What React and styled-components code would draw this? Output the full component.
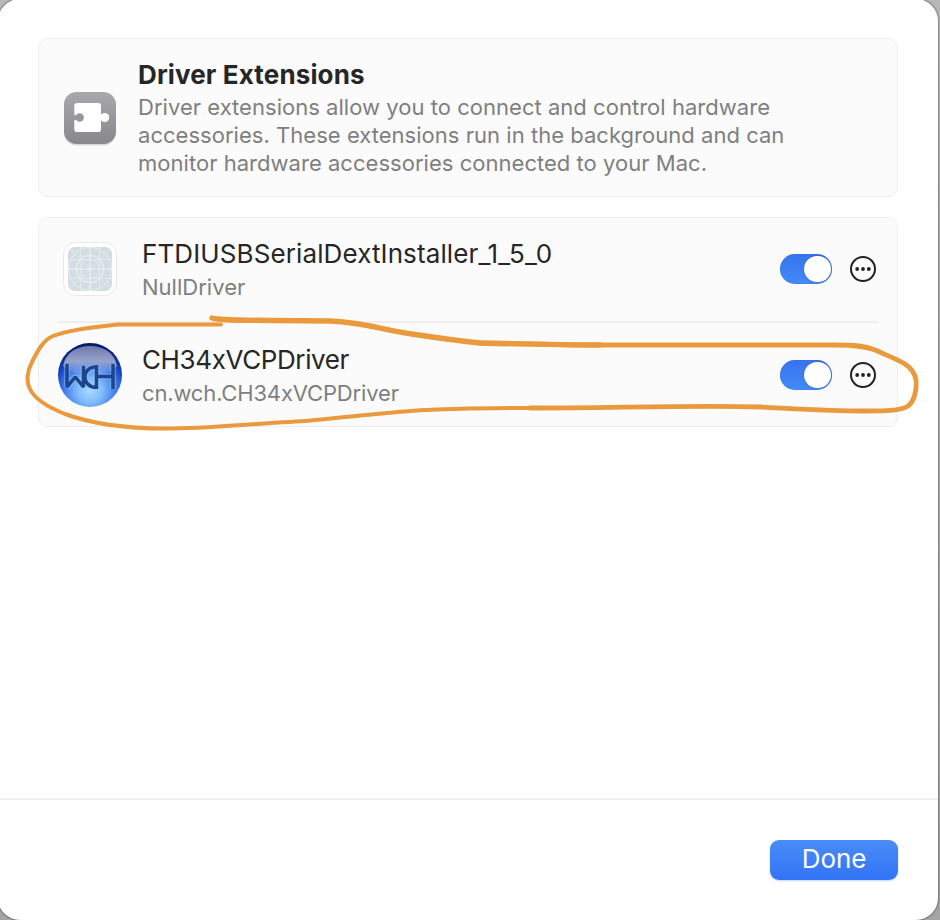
import React from "react";
import styled, { createGlobalStyle } from "styled-components";

const GlobalStyle = createGlobalStyle`
  * { box-sizing: border-box; }
  body {
    margin: 0;
    background: #b4b4b4;
    overflow: hidden;
    font-family: Inter, "Liberation Sans", sans-serif;
  }
`;

const Desktop = styled.div`
  position: relative;
  width: 940px;
  height: 920px;
  overflow: hidden;
  background: linear-gradient(to bottom, #b9b9b9, #a5a5a5);
`;

const Sheet = styled.main`
  display: flex;
  flex-direction: column;
  width: 940px;
  height: 921px;
  margin: -1px 0 0 -2px;
  border-radius: 22px;
  background: #fff;
  box-shadow: 0 0 2px 1px rgba(0, 0, 0, 0.3);
`;

const Content = styled.div`
  display: flex;
  flex: 1;
  flex-direction: column;
  gap: 20px;
  padding: 39px 40px 0;
`;

const Card = styled.section`
  border: 1px solid #ededed;
  border-radius: 10px;
  background: #fbfbfb;
`;

const Intro = styled(Card)`
  display: flex;
  align-items: center;
  gap: 21px;
  height: 159px;
  padding-left: 24px;
`;

const Title = styled.h1`
  margin: 0;
  color: #262626;
  font-size: 26px;
  font-weight: 700;
  line-height: 32px;
  letter-spacing: 0.13px;
`;

const Description = styled.p`
  margin: 2px 0 0;
  color: #7f7f7f;
  font-size: 22px;
  line-height: 28px;
  letter-spacing: 0.03px;
  white-space: pre-line;
`;

const DriverList = styled(Card)`
  height: 210px;
  padding: 0 19px;
`;

const DriverRow = styled.div`
  display: flex;
  align-items: center;
  height: ${({ $last }) => ($last ? "104px" : "105px")};
  padding: 0 2px ${({ $last }) => ($last ? "0" : "1px")} 0;
  border-bottom: ${({ $last }) => ($last ? "none" : "2px solid #eee")};
`;

const IconSlot = styled.div`
  display: flex;
  flex: none;
  justify-content: center;
  width: 64px;
  margin-right: 20px;
`;

const DriverText = styled.div`
  flex: 1;
  padding-top: 2px;
`;

const DriverName = styled.div`
  color: #262626;
  font-size: 26px;
  line-height: 34px;
  letter-spacing: ${({ $tracking }) => $tracking};
`;

const DriverVendor = styled.div`
  color: #7f7f7f;
  font-size: 22px;
  line-height: 32px;
  letter-spacing: ${({ $tracking }) => $tracking};
`;

const Toggle = styled.button`
  display: flex;
  align-items: center;
  justify-content: flex-end;
  width: 52px;
  height: 30px;
  margin-right: 18px;
  padding: 0 1.5px;
  border: 0;
  border-radius: 15px;
  background: linear-gradient(to bottom, #3673ee, #448af8);
  box-shadow: inset 0 0 1px rgba(20, 70, 190, 0.5);
`;

const Knob = styled.span`
  width: 26.5px;
  height: 26.5px;
  border-radius: 50%;
  background: #fff;
  box-shadow: 0 0 2px rgba(0, 30, 110, 0.4);
`;

const MoreButton = styled.button`
  display: flex;
  padding: 0;
  border: 0;
  background: none;
`;

const Footer = styled.footer`
  display: flex;
  align-items: flex-start;
  justify-content: flex-end;
  height: 122px;
  padding: 40px 40px 0;
  border-top: 2px solid #efefef;
`;

const DoneButton = styled.button`
  width: 128px;
  height: 40px;
  padding: 0 0 4px;
  border: 0;
  border-radius: 9px;
  background: linear-gradient(to bottom, #4a8cf8, #3173f6);
  box-shadow: 0 1px 2px rgba(49, 115, 246, 0.3);
  color: #fff;
  font-family: inherit;
  font-size: 26px;
  letter-spacing: -0.1px;
`;

const Annotation = styled.svg`
  position: absolute;
  inset: 0;
  pointer-events: none;
`;

const PuzzleGlyph = styled.svg`
  flex: none;
  margin-top: 2px;
`;

const PuzzleIcon = () => (
  <PuzzleGlyph width="54" height="56" viewBox="63 91 54 56">
    <defs>
      <linearGradient id="puzzle-bg" x2="0" y2="1">
        <stop stopColor="#a9a9ad" />
        <stop offset="1" stopColor="#87878c" />
      </linearGradient>
    </defs>
    <rect x="64" y="93" width="52" height="52.5" rx="12.500" fill="#000" opacity=".14" />
    <rect x="64" y="92" width="52" height="52" rx="12.500" fill="url(#puzzle-bg)" />
    <rect x="74.300" y="103" width="26.700" height="29" rx="2.800" fill="#fff" />
    <path d="M100.500 114C101 115 101.500 115 102 114V121C101.500 120 101 120 100.500 121Z" fill="#fff" />
    <circle cx="104.700" cy="117.500" r="4.500" fill="#fff" />
    <path d="M74 114.500C75 115.500 75.500 115.500 76.500 114.700V120.300C75.500 119.500 75 119.500 74 120.500Z" fill="#98989c" />
    <circle cx="79.700" cy="117.500" r="4.200" fill="#98989c" />
  </PuzzleGlyph>
);

const BlueprintIcon = () => (
  <svg width="56" height="56" viewBox="62 241 56 56">
    <defs>
      <clipPath id="blueprint-clip">
        <rect x="68" y="247" width="44" height="44" rx="7" />
      </clipPath>
    </defs>
    <rect x="63.500" y="242.500" width="53" height="53" rx="12" fill="#fff" stroke="#e9e9e9" />
    <g clipPath="url(#blueprint-clip)" fill="none" stroke="#e6edf0" strokeWidth="1">
      <rect x="68" y="247" width="44" height="44" fill="#d3dce0" stroke="none" />
      <path d="M80.500 247V291M99.500 247V291M68 259.500H112M68 278.500H112M68 247L112 291M112 247L68 291" opacity=".75" />
      <path d="M90 247V291M68 269H112" strokeWidth="1.700" />
      <circle cx="90" cy="269" r="21.500" />
      <circle cx="90" cy="269" r="13.500" strokeWidth="1.500" />
      <circle cx="90" cy="269" r="9.500" />
    </g>
  </svg>
);

const WchIcon = () => (
  <svg width="64" height="64" viewBox="58 343 64 64">
    <defs>
      <radialGradient id="orb" cx=".5" cy=".74" r=".78">
        <stop stopColor="#a9dcff" />
        <stop offset=".25" stopColor="#80bbfc" />
        <stop offset=".5" stopColor="#4480ed" />
        <stop offset=".72" stopColor="#1540bd" />
        <stop offset="1" stopColor="#020b4c" />
      </radialGradient>
      <linearGradient id="orb-gloss" x2="0" y2="1">
        <stop stopColor="#6f79a8" />
        <stop offset=".55" stopColor="#98a3cc" />
        <stop offset="1" stopColor="#8eacf0" stopOpacity=".2" />
      </linearGradient>
    </defs>
    <circle cx="90" cy="375" r="32" fill="url(#orb)" />
    <path d="M63 366C66 352 77 346 90 346S114 352 117 366C112 372 103 374 90 374S68 372 63 366Z" fill="url(#orb-gloss)" />
    <g fill="none" strokeLinejoin="bevel">
      <path d="M67 364V387L75.300 377L83.500 387V366M97 367H94.500C82 368 81 386 95.500 387.500M96.500 365V389M97 376.500H113M113 364V389" stroke="#9bc7ff" strokeWidth="6" opacity=".4" />
      <path d="M67 364V387L75.300 377L83.500 387V366M97 367H94.500C82 368 81 386 95.500 387.500M96.500 365V389M97 376.500H113M113 364V389" stroke="#1b4689" strokeWidth="3.500" />
    </g>
  </svg>
);

const MoreIcon = () => (
  <svg width="26" height="26" viewBox="0 0 26 26">
    <circle cx="13" cy="13" r="12" fill="none" stroke="#222" strokeWidth="2" />
    <g fill="#222">
      <circle cx="7.200" cy="13" r="1.900" />
      <circle cx="13" cy="13" r="1.900" />
      <circle cx="18.800" cy="13" r="1.900" />
    </g>
  </svg>
);

const drivers = [
  { name: "FTDIUSBSerialDextInstaller_1_5_0", vendor: "NullDriver", Icon: BlueprintIcon, nameTracking: "0.11px", vendorTracking: "0.02px" },
  { name: "CH34xVCPDriver", vendor: "cn.wch.CH34xVCPDriver", Icon: WchIcon, nameTracking: "-0.38px", vendorTracking: "-0.16px" },
];

export default function App() {
  return (
    <Desktop>
      <GlobalStyle />
      <Sheet>
        <Content>
          <Intro>
            <PuzzleIcon />
            <div>
              <Title>Driver Extensions</Title>
              <Description>
                {"Driver extensions allow you to connect and control hardware\naccessories. These extensions run in the background and can\nmonitor hardware accessories connected to your Mac."}
              </Description>
            </div>
          </Intro>
          <DriverList>
            {drivers.map(({ name, vendor, Icon, nameTracking, vendorTracking }, i) => (
              <DriverRow key={name} $last={i === drivers.length - 1}>
                <IconSlot>
                  <Icon />
                </IconSlot>
                <DriverText>
                  <DriverName $tracking={nameTracking}>{name}</DriverName>
                  <DriverVendor $tracking={vendorTracking}>{vendor}</DriverVendor>
                </DriverText>
                <Toggle role="switch" aria-checked="true" aria-label={name}>
                  <Knob />
                </Toggle>
                <MoreButton aria-label="More">
                  <MoreIcon />
                </MoreButton>
              </DriverRow>
            ))}
          </DriverList>
        </Content>
        <Footer>
          <DoneButton>Done</DoneButton>
        </Footer>
      </Sheet>
      <Annotation width="940" height="920" viewBox="0 0 940 920" fill="none" stroke="#ea9a3c" strokeLinecap="round" strokeLinejoin="round">
        <path strokeWidth="4" d="M221 324.500H118C92 327 66 331 53 336C43 340 37 352 32 362C27 371 26 382 30 389C35 400 50 408 65 414C95 425 130 428.500 165 428.500C210 428.500 245 424 290 422C325 420 370 414 410 411C450 408.500 490 408 530 408" />
        <path strokeWidth="4.800" d="M530 408C610 408 700 405 760 407C800 409 830 411 865 411C885 411 900 411 908 406C914 402 917 390 916 380C915 373 911 368 905 364C897 359 886 355 875 350C865 346 855 345 835 345H600C560 345 520 344 480 343" />
        <path strokeWidth="5.400" d="M212 318C220 321 250 320 330 321C365 322 385 331 412 334C438 338 460 341 480 343C520 344 560 345 600 345" />
      </Annotation>
    </Desktop>
  );
}
